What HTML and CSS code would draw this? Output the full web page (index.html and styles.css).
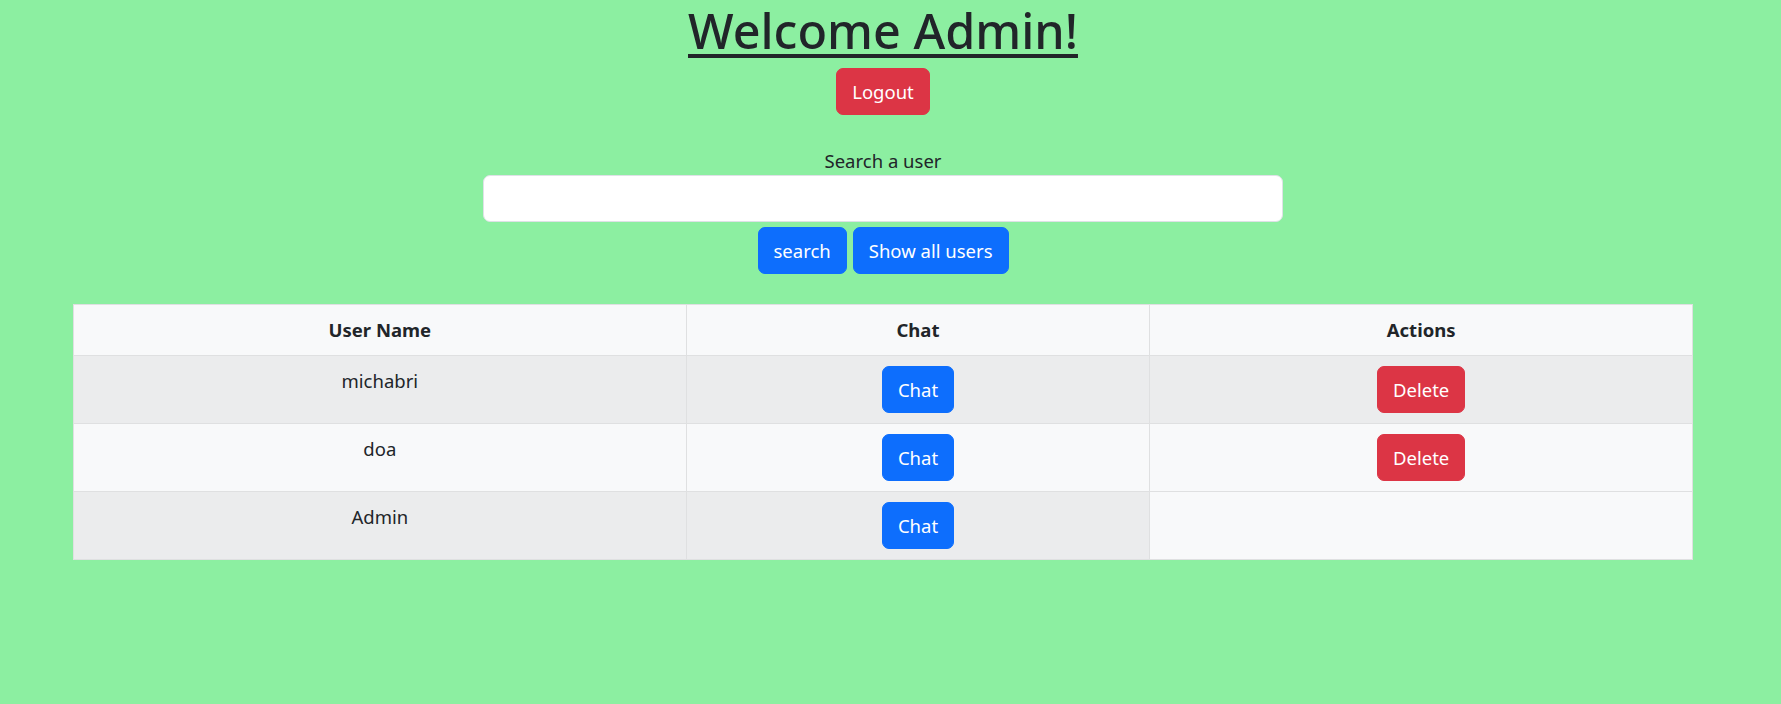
FILE: index.html
```html
<!DOCTYPE html>
<html lang="en">
<head>
<meta charset="utf-8">
<title>Admin</title>
<link rel="stylesheet" href="styles.css">
</head>
<body>
<div class="page">
  <h1 class="title"><u>Welcome Admin!</u></h1>
  <button class="btn btn-danger">Logout</button>

  <form class="search">
    <label class="search-label" for="q">Search a user</label>
    <input class="search-input" id="q" type="text">
    <div class="search-actions">
      <button type="button" class="btn btn-primary">search</button>
      <button type="button" class="btn btn-primary">Show all users</button>
    </div>
  </form>

  <table class="users">
    <thead>
      <tr>
        <th class="col-name">User Name</th>
        <th class="col-chat">Chat</th>
        <th class="col-actions">Actions</th>
      </tr>
    </thead>
    <tbody>
      <tr class="odd">
        <td>michabri</td>
        <td><button class="btn btn-primary">Chat</button></td>
        <td><button class="btn btn-danger">Delete</button></td>
      </tr>
      <tr>
        <td>doa</td>
        <td><button class="btn btn-primary">Chat</button></td>
        <td><button class="btn btn-danger">Delete</button></td>
      </tr>
      <tr class="odd">
        <td>Admin</td>
        <td><button class="btn btn-primary">Chat</button></td>
      </tr>
    </tbody>
  </table>
</div>
</body>
</html>
```
FILE: styles.css
```css
* { box-sizing: border-box; }

body {
  margin: 0;
  background: #8cefa1;
  color: #212529;
  font-family: "Noto Sans", "Open Sans", sans-serif;
  font-size: 18.5px;
  line-height: 30px;
}

.page {
  width: calc(100% - 15px);
  text-align: center;
}

.title {
  margin: 0 0 8px;
  padding-top: 1px;
  height: 60px;
  font-size: 48.5px;
  font-weight: 500;
  line-height: 58px;
}

.title u {
  text-decoration-thickness: 4px;
  text-underline-offset: 5px;
}

.btn {
  display: inline-block;
  font: inherit;
  height: 47px;
  padding: 7px 15px;
  border: 1px solid transparent;
  border-radius: 7px;
  color: #fff;
  vertical-align: middle;
  cursor: pointer;
}

.btn-danger { background: #dc3545; border-color: #dc3545; }
.btn-primary { background: #0d6efd; border-color: #0d6efd; }

.search {
  margin: 31px 0 0;
  display: flex;
  flex-direction: column;
  align-items: center;
}

.search-label {
  display: block;
  line-height: 29px;
}

.search-input {
  width: 800px;
  height: 47px;
  border: 1px solid #dee2e6;
  border-radius: 7px;
  background: #fff;
  font: inherit;
}

.search-actions {
  margin-top: 5px;
  display: flex;
  gap: 6px;
}

.users {
  margin: 30px 73px 0;
  width: calc(100% - 146px);
  border-collapse: collapse;
  background: #f8f9fa;
  border: 1px solid #dfe0e1;
}

.users th,
.users td {
  border: 1px solid #dfe0e1;
  padding: 10px;
  vertical-align: top;
  text-align: center;
  background: #f8f9fa;
}

.users th { font-weight: 700; line-height: 30px; }

.users tr.odd td { background: #ebeced; }

.col-name { width: 613px; }
.col-chat { width: 464px; }
.col-actions { width: 543px; }
```
